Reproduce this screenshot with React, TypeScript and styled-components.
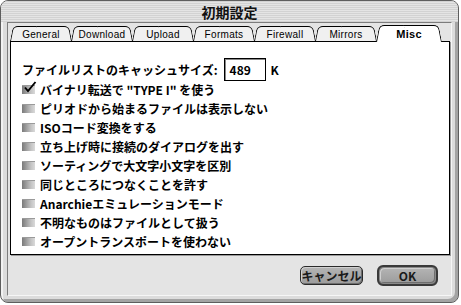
import styled, { createGlobalStyle } from "styled-components"

const GlobalStyle = createGlobalStyle`
  html, body {
    margin: 0;
    padding: 0;
    background: #ffffff;
  }
  * {
    box-sizing: border-box;
  }
`

const JP = `"Noto Sans CJK JP", "Noto Sans", sans-serif`

const tabs = ['General', 'Download', 'Upload', 'Formats', 'Firewall', 'Mirrors', 'Misc']

const options = [
  { label: 'バイナリ転送で "TYPE I" を使う', checked: true },
  { label: 'ピリオドから始まるファイルは表示しない', checked: false },
  { label: 'ISOコード変換をする', checked: false },
  { label: '立ち上げ時に接続のダイアログを出す', checked: false },
  { label: 'ソーティングで大文字小文字を区別', checked: false },
  { label: '同じところにつなくことを許す', checked: false },
  { label: 'Anarchieエミュレーションモード', checked: false },
  { label: '不明なものはファイルとして扱う', checked: false },
  { label: 'オープントランスポートを使わない', checked: false },
]

function CheckMark () {
  return <CheckSvg width="14" height="12" viewBox="0 0 14 12">
    <path
      d="M2 6.5 L5 10 L12.5 1"
      fill="none"
      stroke="#000"
      strokeWidth="1.9"
    />
  </CheckSvg>
}

export default function App () {
  return <>
    <GlobalStyle />
    <Window>
      <TitleBar>初期設定</TitleBar>
      <Body>
        <TabRow>
          {tabs.map((t) => (
            <Tab key={t} $active={t === 'Misc'} $wide={t === 'Misc'}>
              <TabText>{t}</TabText>
            </Tab>
          ))}
        </TabRow>
        <Panel>
          <CacheRow>
            <Label>ファイルリストのキャッシュサイズ:</Label>
            <NumberField>489</NumberField>
            <Label>K</Label>
          </CacheRow>
          <OptionList>
            {options.map((o) => (
              <OptionRow key={o.label}>
                <CheckBox>
                  {o.checked && <CheckMark />}
                </CheckBox>
                <Label>{o.label}</Label>
              </OptionRow>
            ))}
          </OptionList>
        </Panel>
        <ButtonRow>
          <Button>キャンセル</Button>
          <DefaultRing>
            <Button $ok>OK</Button>
          </DefaultRing>
        </ButtonRow>
      </Body>
    </Window>
  </>
}

const Window = styled.div`
  width: 459px;
  height: 303px;
  border: 1px solid #5e5e5e;
  border-radius: 8px;
  background: #dcdcdc;
  box-shadow: inset 2px 2px 0 #f2f2f2, inset -3px -3px 0 #a4a4a4;
  display: flex;
  flex-direction: column;
  overflow: hidden;
`

const TitleBar = styled.div`
  height: 21px;
  display: flex;
  align-items: center;
  justify-content: center;
  font-family: ${JP};
  font-weight: 700;
  font-size: 14px;
  color: #111;
  padding-top: 1px;
  background: repeating-linear-gradient(
    to bottom,
    #d2d2d2 0px,
    #d2d2d2 1px,
    #e4e4e4 1px,
    #e4e4e4 2px
  );
`

const Body = styled.div`
  flex: 1;
  margin: 0 6px 6px 6px;
  padding: 2px 1px 0 2px;
  background: #e4e4e4;
  border-left: 1px solid #7c7c7c;
  border-top: 1px solid #7c7c7c;
  border-right: 1px solid #f6f6f6;
  border-bottom: 1px solid #f6f6f6;
  display: flex;
  flex-direction: column;
`

const TabRow = styled.div`
  display: flex;
  align-items: flex-end;
  height: 16px;
`

const Tab = styled.div<{ $active?: boolean, $wide?: boolean }>`
  width: ${(p) => (p.$wide ? '66px' : '62px')};
  height: ${(p) => (p.$active ? '17px' : '15px')};
  margin-bottom: ${(p) => (p.$active ? '-1px' : '0')};
  margin-right: -1px;
  position: relative;
  z-index: ${(p) => (p.$active ? 2 : 1)};
  display: flex;
  align-items: center;
  justify-content: center;
  padding-top: 1px;

  &::before,
  &::after {
    content: '';
    position: absolute;
    top: 0;
    bottom: 0;
    width: 52%;
    z-index: -1;
    border-top: 1px solid #000;
    background: ${(p) => (p.$active ? '#ffffff' : '#f0f0f0')};
    transform-origin: bottom;
  }

  &::before {
    left: 0;
    border-left: 1px solid #000;
    border-top-left-radius: 5px;
    transform: skewX(-11deg);
  }

  &::after {
    right: 0;
    border-right: 1px solid #000;
    border-top-right-radius: 5px;
    transform: skewX(11deg);
  }
`

const TabText = styled.span<{}>`
  font-family: "Liberation Sans", "DejaVu Sans", sans-serif;
  font-size: 10px;
  letter-spacing: 0.3px;
  color: #000;

  ${Tab}:last-child & {
    font-weight: 700;
    font-size: 11px;
  }
`

const Panel = styled.div`
  height: 214px;
  border: 1px solid #000;
  background: #ffffff;
  box-shadow: 1px 1px 0 #9a9a9a;
  padding: 16px 0 0 11px;
  display: flex;
  flex-direction: column;
`

const CacheRow = styled.div`
  display: flex;
  align-items: center;
  height: 23px;
  gap: 6px;
`

const Label = styled.span`
  font-family: ${JP};
  font-weight: 700;
  font-size: 12px;
  color: #000;
  white-space: nowrap;
`

const NumberField = styled.div`
  width: 42px;
  height: 23px;
  border: 1px solid #000;
  box-shadow: inset 1px 1px 0 #888;
  padding-left: 5px;
  display: flex;
  align-items: center;
  font-family: ${JP};
  font-weight: 700;
  font-size: 12px;
  margin-right: -1px;
`

const OptionList = styled.div`
  display: flex;
  flex-direction: column;
  margin-top: -1px;
`

const OptionRow = styled.div`
  display: flex;
  align-items: center;
  height: 19px;
  gap: 5px;
`

const CheckBox = styled.div`
  position: relative;
  width: 13px;
  height: 9px;
  background: linear-gradient(to right, #7a7a7a, #c4c4c4 70%, #dadada);
  box-shadow: inset 0 1px 0 #9a9a9a;
  flex-shrink: 0;
`

const CheckSvg = styled.svg`
  position: absolute;
  left: 1px;
  top: -4px;
`

const ButtonRow = styled.div`
  display: flex;
  justify-content: flex-end;
  align-items: center;
  gap: 14px;
  margin-top: 10px;
  padding-right: 12px;
`

const DefaultRing = styled.div`
  width: 61px;
  height: 21px;
  border: 2px solid #3a3a3a;
  border-radius: 6px;
  background: #6a6a6a;
  display: flex;
`

const Button = styled.div<{ $ok?: boolean }>`
  width: ${(p) => (p.$ok ? '100%' : '63px')};
  height: ${(p) => (p.$ok ? '100%' : '19px')};
  border: 1px solid ${(p) => (p.$ok ? '#8a8a8a' : '#2a2a2a')};
  border-radius: 5px;
  background: linear-gradient(to bottom, #b4b4b4, #9c9c9c);
  box-shadow: inset 1px 1px 0 #d0d0d0, inset -1px -1px 0 #6e6e6e;
  display: flex;
  align-items: center;
  justify-content: center;
  font-family: ${JP};
  font-weight: 700;
  font-size: 12px;
  color: #1a1a1a;
`
